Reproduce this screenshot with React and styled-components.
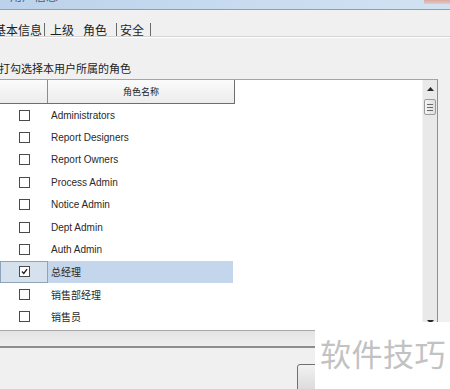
import React from "react";
import styled, { createGlobalStyle } from "styled-components";

const Global = createGlobalStyle`
  html, body { margin: 0; padding: 0; background: #f0f0f0; }
  body { width: 450px; height: 389px; overflow: hidden; font-family: "Liberation Sans", "Noto Sans CJK SC", sans-serif; }
  *, *::before, *::after { box-sizing: border-box; }
`;

const Window = styled.div`
  position: relative;
  width: 450px;
  height: 389px;
  display: flex;
  flex-direction: column;
  background: #f0f0f0;
  overflow: hidden;
`;

const TitleBar = styled.div`
  height: 10px;
  flex: none;
  display: flex;
  justify-content: space-between;
  background: linear-gradient(90deg, #bcd2ea 0%, #c9dcf0 60%, #d2e2f2 100%);
  border-bottom: 1px solid #8d9fb5;
  overflow: hidden;
`;

const TitleText = styled.span`
  font-family: "Noto Sans CJK SC", sans-serif;
  font-size: 12px;
  line-height: 12px;
  margin: -10px 0 0 10px;
  color: #4a5d75;
`;

const CloseEdge = styled.span`
  width: 26px;
  height: 4px;
  background: linear-gradient(180deg, #d9a9a2, #e8c9c2);
`;

const TabBar = styled.div`
  height: 27px;
  flex: none;
  display: flex;
  align-items: flex-end;
  padding-bottom: 0;
  border-bottom: 1px solid #d4d4d4;
  box-shadow: 0 1px 0 #ffffff;
  font-family: "Noto Sans CJK SC", sans-serif;
  font-size: 12px;
  color: #1e1e1e;
`;

const Tab = styled.span`
  margin-left: ${(p) => p.$ml}px;
  line-height: 12px;
  white-space: nowrap;
`;

const TabSep = styled.span`
  width: 1px;
  height: 13px;
  margin-left: ${(p) => p.$ml}px;
  background: #6a6a6a;
`;

const Label = styled.div`
  flex: none;
  margin: 22px 0 0 -1px;
  height: 20px;
  font-family: "Noto Sans CJK SC", sans-serif;
  font-size: 11px;
  line-height: 18px;
  color: #1c1c1c;
`;

const GridBox = styled.div`
  display: flex;
  width: 438px;
  height: 251px;
  background: #ffffff;
  border-top: 1px solid #a5a5a5;
  border-right: 1px solid #8a8f98;
  flex: none;
`;

const Table = styled.div`
  width: 235px;
  display: flex;
  flex-direction: column;
`;

const Filler = styled.div`
  flex: 1;
  background: #ffffff;
`;

const HeaderRow = styled.div`
  display: grid;
  grid-template-columns: 48px 1fr;
  height: 24px;
  flex: none;
  background: linear-gradient(180deg, #fbfbfb, #ececec);
  border-bottom: 1px solid #6e6e6e;
  border-right: 1px solid #6e6e6e;
`;

const HeaderCell = styled.div`
  border-right: ${(p) => (p.$sep ? "1px solid #8c8c8c" : "none")};
  display: flex;
  align-items: center;
  justify-content: center;
  font-family: "Noto Sans CJK SC", sans-serif;
  font-size: 9px;
  color: #222;
`;

const Row = styled.div`
  display: grid;
  grid-template-columns: 48px 1fr;
  height: 22.4px;
  flex: none;
  background: ${(p) => (p.$selected ? "#c4d6eb" : "#ffffff")};
  margin-right: 2px;
`;

const CheckCell = styled.div`
  display: flex;
  align-items: center;
  justify-content: center;
  background: ${(p) => (p.$selected ? "#d6e1ee" : "transparent")};
  border: ${(p) => (p.$selected ? "1px solid #8fa3bb" : "1px solid transparent")};
`;

const Box = styled.span`
  width: 11px;
  height: 11px;
  border: 1px solid #4a4a4a;
  background: #ffffff;
  display: flex;
  align-items: center;
  justify-content: center;
`;

const NameCell = styled.div`
  display: flex;
  align-items: center;
  padding-left: 3px;
  font-family: "Liberation Sans", "Noto Sans CJK SC", sans-serif;
  font-size: 10px;
  color: #2a2a2a;
  white-space: nowrap;
`;

const ScrollBar = styled.div`
  width: 15px;
  display: flex;
  flex-direction: column;
  align-items: center;
  background: #e9e9e9;
  border-left: 1px solid #f4f4f4;
`;

const Arrow = styled.div`
  height: 17px;
  width: 100%;
  display: flex;
  align-items: center;
  justify-content: center;
`;

const Thumb = styled.div`
  margin-top: 2px;
  width: 12px;
  height: 16px;
  border: 1px solid #9c9c9c;
  border-radius: 2px;
  background: linear-gradient(90deg, #f4f4f4, #dedede);
  display: flex;
  flex-direction: column;
  align-items: center;
  justify-content: center;
  gap: 2px;
`;

const Grip = styled.span`
  width: 6px;
  height: 1px;
  background: #6a6a6a;
`;

const Track = styled.div`
  flex: 1;
`;

const Band = styled.div`
  height: 18px;
  flex: none;
  border-top: 1px solid #a8a8a8;
  border-bottom: 2px solid #8e8e8e;
  background: linear-gradient(180deg, #e4e4e4, #eeeeee);
`;

const Footer = styled.div`
  flex: 1;
  min-height: 0;
  overflow: hidden;
  display: flex;
  align-items: flex-start;
  padding: 16px 0 0 297px;
`;

const Button = styled.div`
  width: 80px;
  height: 28px;
  flex: none;
  border: 1px solid #707070;
  border-radius: 3px;
  background: linear-gradient(180deg, #f2f2f2, #dadada);
`;

const Watermark = styled.div`
  position: absolute;
  left: 315px;
  top: 322px;
  right: 0;
  bottom: 0;
  background: #ffffff;
  display: flex;
  align-items: flex-start;
  padding: 13px 0 0 5px;
  font-family: "Noto Sans CJK SC", sans-serif;
  font-size: 31px;
  line-height: 36px;
  letter-spacing: 0.5px;
  color: #c2c2c2;
`;

const roles = [
  "Administrators",
  "Report Designers",
  "Report Owners",
  "Process Admin",
  "Notice Admin",
  "Dept Admin",
  "Auth Admin",
  "总经理",
  "销售部经理",
  "销售员",
];

const Check = () => (
  <svg width="7" height="7" viewBox="0 0 7 7">
    <path d="M1 3.5 L2.8 5.4 L6 1.2" fill="none" stroke="#1a1a1a" strokeWidth="1.3" />
  </svg>
);

const Tri = ({ down }) => (
  <svg width="7" height="4" viewBox="0 0 7 4">
    <path d={down ? "M0 0 H7 L3.5 4 Z" : "M0 4 H7 L3.5 0 Z"} fill="#2a2a2a" />
  </svg>
);

export default function App() {
  return (
    <>
      <Global />
      <Window>
        <TitleBar>
          <TitleText>用户信息</TitleText>
          <CloseEdge />
        </TitleBar>
        <TabBar>
          <Tab $ml={-6}>基本信息</Tab>
          <TabSep $ml={2} />
          <Tab $ml={5}>上级</Tab>
          <Tab $ml={9}>角色</Tab>
          <TabSep $ml={9} />
          <Tab $ml={3}>安全</Tab>
          <TabSep $ml={6} />
        </TabBar>
        <Label>打勾选择本用户所属的角色</Label>
        <GridBox>
          <Table>
            <HeaderRow>
              <HeaderCell $sep />
              <HeaderCell>角色名称</HeaderCell>
            </HeaderRow>
            {roles.map((r, i) => {
              const sel = i === 7;
              return (
                <Row key={r} $selected={sel}>
                  <CheckCell $selected={sel}>
                    <Box>{sel && <Check />}</Box>
                  </CheckCell>
                  <NameCell>{r}</NameCell>
                </Row>
              );
            })}
          </Table>
          <Filler />
          <ScrollBar>
            <Arrow><Tri /></Arrow>
            <Thumb>
              <Grip />
              <Grip />
              <Grip />
            </Thumb>
            <Track />
            <Arrow><Tri down /></Arrow>
          </ScrollBar>
        </GridBox>
        <Band />
        <Footer>
          <Button />
        </Footer>
        <Watermark>软件技巧</Watermark>
      </Window>
    </>
  );
}
